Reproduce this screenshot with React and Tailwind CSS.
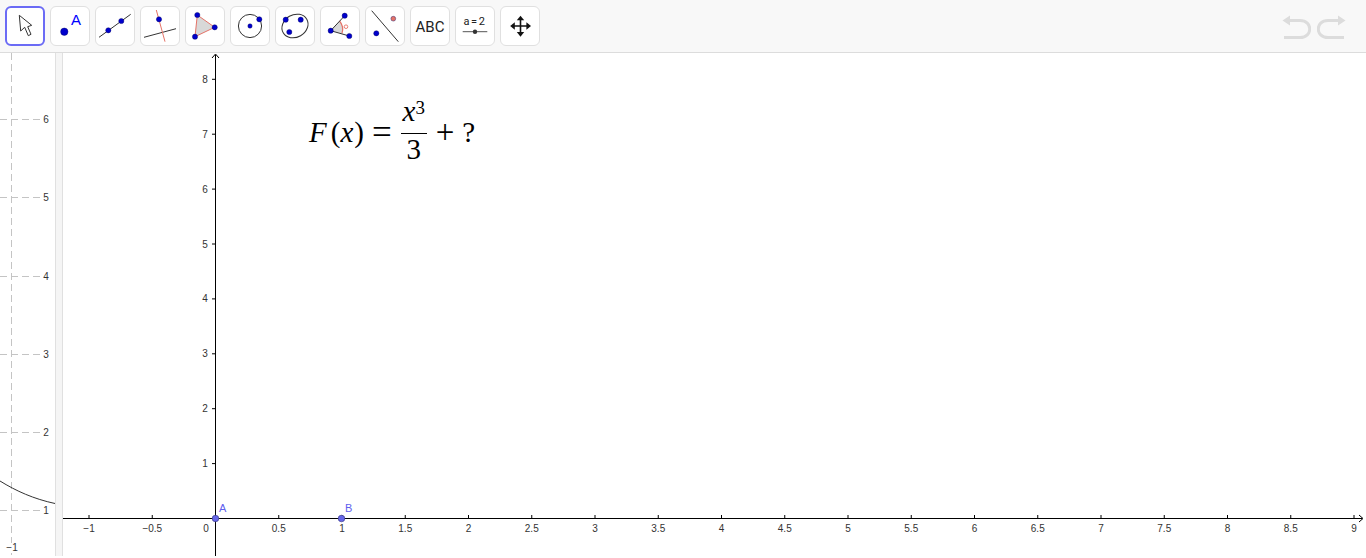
import React from 'react'

const BLUE = '#0000cc'
const RED = '#e57368'

function Dot({ x, y, r = 2.6, fill = BLUE }) {
  return <circle cx={x} cy={y} r={r} fill={fill} stroke="#00005a" strokeWidth="0.4" />
}

const icons = [
  <polygon points="14.3,9.3 15.7,25 19.7,21.3 23.3,29.7 26,28.3 22.7,20.7 26.7,19.3" fill="#fff" stroke="#333" strokeWidth="1" strokeLinejoin="round" />,
  <>
    <circle cx="14.3" cy="25.7" r="3.7" fill={BLUE} stroke="#00005a" strokeWidth="0.4" />
    <text x="26" y="19.3" textAnchor="middle" fontSize="15" fill="#0000ff" fontFamily="Liberation Sans, sans-serif">A</text>
  </>,
  <>
    <line x1="4" y1="31.3" x2="35.7" y2="8.3" stroke="#333" strokeWidth="1" />
    <Dot x={13.3} y={24.3} />
    <Dot x={26.3} y={15} />
  </>,
  <>
    <line x1="4" y1="31.3" x2="36" y2="22.7" stroke="#333" strokeWidth="1" />
    <line x1="16.3" y1="4" x2="25" y2="35.7" stroke={RED} strokeWidth="1" />
    <Dot x={19} y={13.3} />
  </>,
  <>
    <polygon points="12.3,9 29.7,21.3 10,30.7" fill="#d8d8d8" stroke={RED} strokeWidth="1" />
    <Dot x={12.3} y={9} />
    <Dot x={29.7} y={21.3} />
    <Dot x={10} y={30.7} />
  </>,
  <>
    <circle cx="20" cy="20" r="11.6" fill="none" stroke="#333" strokeWidth="1" />
    <Dot x={20} y={20} r={2.2} />
    <Dot x={29.3} y={13.3} />
  </>,
  <>
    <ellipse cx="20" cy="20" rx="13.6" ry="11.2" fill="none" stroke="#333" strokeWidth="1" transform="rotate(-30 20 20)" />
    <Dot x={10.7} y={13.7} />
    <Dot x={25.7} y={13.7} />
    <Dot x={14.3} y={26} />
  </>,
  <>
    <path d="M10.7 24.7 L19.5 15 A13 13 0 0 1 22 27.4 Z" fill="#d8d8d8" />
    <path d="M19.5 15 A13 13 0 0 1 22 27.4" fill="none" stroke={RED} strokeWidth="1.2" />
    <line x1="10.7" y1="24.7" x2="24.7" y2="9.7" stroke="#333" strokeWidth="1" />
    <line x1="10.7" y1="24.7" x2="29.3" y2="30" stroke="#333" strokeWidth="1" />
    <circle cx="26" cy="20.7" r="1.8" fill="none" stroke={RED} strokeWidth="0.9" />
    <Dot x={10.7} y={24.7} />
    <Dot x={24.7} y={9.7} />
    <Dot x={29.3} y={30} />
  </>,
  <>
    <line x1="6.7" y1="4.7" x2="33.3" y2="35.7" stroke="#333" strokeWidth="1" />
    <Dot x={11.3} y={27.3} />
    <Dot x={28.3} y={12.7} r={2.4} fill={RED} />
  </>,
  <text x="20" y="25.5" textAnchor="middle" fontSize="15" fill="#222" fontFamily="Roboto, sans-serif">ABC</text>,
  <>
    <text x="20" y="18.5" textAnchor="middle" fontSize="11" letterSpacing="1.6" fill="#222" fontFamily="Roboto, sans-serif">a=2</text>
    <line x1="7.7" y1="25.7" x2="32.3" y2="25.7" stroke="#555" strokeWidth="1" />
    <circle cx="20" cy="25.7" r="2.2" fill="#333" />
  </>,
  <>
    <path d="M20.5 13 V27 M14 20 H27" stroke="#111" strokeWidth="1.6" />
    <polygon points="20.5,9.7 16.8,14.3 24.2,14.3" fill="#111" />
    <polygon points="20.5,30.7 16.8,26 24.2,26" fill="#111" />
    <polygon points="10.2,20 14.8,16.3 14.8,23.7" fill="#111" />
    <polygon points="31,20 26.4,16.3 26.4,23.7" fill="#111" />
  </>,
]

function Toolbar() {
  return (
    <div className="h-[53px] shrink-0 flex items-start bg-[#f8f8f8] border-b border-[#dcdcdc] pl-[5px] pt-[6px]">
      <div className="flex gap-[5px]">
        {icons.map((icon, i) => (
          <div
            key={i}
            className={
              i === 0
                ? 'w-[40px] h-[40px] rounded-[6px] bg-white border-2 border-[#6b6bf5]'
                : 'w-[40px] h-[40px] rounded-[6px] bg-white border border-[#e0e0e0]'
            }
          >
            <svg
              width="40"
              height="40"
              viewBox="0 0 40 40"
              className={i === 0 ? 'block -m-[2px]' : 'block -m-[1px]'}
            >
              {icon}
            </svg>
          </div>
        ))}
      </div>
      <div className="ml-auto flex gap-[6px] pr-[19px] pt-[8px]">
        <svg width="30" height="26" viewBox="0 0 30 26" className="block">
          <path d="M7 6.5 H19 C32 6.5 32 23.5 19 23.5 H3" fill="none" stroke="#dcdcdc" strokeWidth="3" />
          <polygon points="1.5,6.5 9,1.5 9,11.5" fill="#dcdcdc" />
        </svg>
        <svg width="30" height="26" viewBox="0 0 30 26" className="block">
          <path d="M23 6.5 H11 C-2 6.5 -2 23.5 11 23.5 H27" fill="none" stroke="#dcdcdc" strokeWidth="3" />
          <polygon points="28.5,6.5 21,1.5 21,11.5" fill="#dcdcdc" />
        </svg>
      </div>
    </div>
  )
}

const labelFont = { fontFamily: 'Liberation Sans, sans-serif', fontSize: 10, fill: '#333' }

function LeftGraph() {
  const rows = [
    [119, '6'],
    [197, '5'],
    [276, '4'],
    [354, '3'],
    [432, '2'],
    [510, '1'],
  ]
  return (
    <svg width="55" height="503" viewBox="0 53 55 503" className="block shrink-0">
      <line x1="11.5" y1="53" x2="11.5" y2="556" stroke="#c4c4c4" strokeDasharray="7 4" />
      {rows.map(([y, label]) => (
        <g key={label}>
          <line x1="0" y1={y + 0.5} x2="55" y2={y + 0.5} stroke="#c4c4c4" strokeDasharray="7 4" />
          <rect x="41" y={y - 5} width="10" height="11" fill="#fff" />
          <text x="46" y={y + 4} textAnchor="middle" {...labelFont}>{label}</text>
        </g>
      ))}
      <rect x="7" y="543" width="11" height="10" fill="#fff" />
      <text x="12" y="551" textAnchor="middle" {...labelFont}>−1</text>
      <path d="M0 481 C 16 491, 34 499, 55 503.5" fill="none" stroke="#333" strokeWidth="1" />
    </svg>
  )
}

function MainGraph() {
  const xTicks = [-1, -0.5, 0.5, 1, 1.5, 2, 2.5, 3, 3.5, 4, 4.5, 5, 5.5, 6, 6.5, 7, 7.5, 8, 8.5, 9]
  const yTicks = [1, 2, 3, 4, 5, 6, 7, 8]
  return (
    <svg width="1303" height="503" viewBox="63 53 1303 503" className="block absolute inset-0">
      <line x1="63" y1="518.5" x2="1362" y2="518.5" stroke="#000" />
      <line x1="215.5" y1="55" x2="215.5" y2="556" stroke="#000" />
      <path d="M1359 515 L1363 518.5 L1359 522" fill="none" stroke="#000" />
      <path d="M212 58 L215.5 54 L219 58" fill="none" stroke="#000" />
      {xTicks.map(t => {
        const x = 215.5 + t * 126.5
        return (
          <g key={t}>
            <line x1={x} y1="515" x2={x} y2="518" stroke="#000" />
            <text x={x} y="532" textAnchor="middle" {...labelFont}>
              {t < 0 ? '−' + Math.abs(t) : t}
            </text>
          </g>
        )
      })}
      <text x="206" y="532" textAnchor="middle" {...labelFont}>0</text>
      {yTicks.map(t => {
        const y = 518.5 - t * 54.9
        return (
          <g key={t}>
            <line x1="212" y1={y} x2="215" y2={y} stroke="#000" />
            <text x="205" y={y + 3.5} textAnchor="middle" {...labelFont}>{t}</text>
          </g>
        )
      })}
      <circle cx="215.5" cy="518.5" r="3.3" fill="#6666e8" stroke="#333380" strokeWidth="0.6" />
      <circle cx="341.5" cy="518.5" r="3.3" fill="#6666e8" stroke="#333380" strokeWidth="0.6" />
      <text x="219" y="512" fontSize="11" fill="#6060ee" fontFamily="Liberation Sans, sans-serif">A</text>
      <text x="345" y="512" fontSize="11" fill="#6060ee" fontFamily="Liberation Sans, sans-serif">B</text>
    </svg>
  )
}

function Formula() {
  return (
    <div className="absolute left-[246px] top-[46px] flex items-center text-[29px] leading-none text-black font-['Liberation_Serif',serif] whitespace-nowrap">
      <span className="italic">F</span>
      <span className="ml-[4px]">(</span>
      <span className="italic">x</span>
      <span className="ml-[1px]">)</span>
      <span className="ml-[8px] mr-[9px] text-[35px]">=</span>
      <div className="flex flex-col items-center w-[26px]">
        <div className="h-[34px] flex items-end pb-[7px]">
          <span className="italic">x</span>
          <span className="text-[19px] mb-[9px]">3</span>
        </div>
        <div className="w-full h-[1px] bg-black"></div>
        <div className="h-[31px] flex items-center">3</div>
      </div>
      <span className="ml-[9px] mr-[8px] text-[33px]">+</span>
      <span>?</span>
    </div>
  )
}

export default function App() {
  return (
    <div className="w-[1366px] h-[558px] overflow-hidden flex flex-col bg-white">
      <Toolbar />
      <div className="h-[503px] flex">
        <LeftGraph />
        <div className="w-[8px] shrink-0 bg-[#f5f5f5] border-x border-[#e0e0e0]"></div>
        <div className="relative flex-1">
          <MainGraph />
          <Formula />
        </div>
      </div>
    </div>
  )
}
